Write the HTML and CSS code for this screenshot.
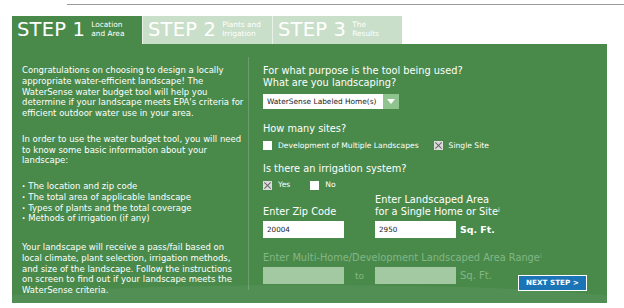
FILE: index.html
```html
<!DOCTYPE html>
<html lang="en">
<head>
    <meta charset="UTF-8">
    <meta name="viewport" content="width=device-width, initial-scale=1.0">
    <title>WaterSense Water Budget Tool</title>
    <link rel="stylesheet" href="styles.css">
</head>
<body>
    <div class="top-rule"></div>
    <div class="wizard">
        <div class="tabs">
            <div class="tab active">
                <span class="tab-step">STEP 1</span>
                <span class="tab-label">Location<br>and Area</span>
            </div>
            <div class="tab">
                <span class="tab-step">STEP 2</span>
                <span class="tab-label">Plants and<br>Irrigation</span>
            </div>
            <div class="tab">
                <span class="tab-step">STEP 3</span>
                <span class="tab-label">The<br>Results</span>
            </div>
        </div>
        <div class="panel">
            <div class="panel-bg"></div>
            <div class="intro">
                <p>Congratulations on choosing to design a locally<br>appropriate water-efficient landscape! The<br>WaterSense water budget tool will help you<br>determine if your landscape meets EPA's criteria for<br>efficient outdoor water use in your area.</p>
                <p>In order to use the water budget tool, you will need<br>to know some basic information about your<br>landscape:</p>
                <ul>
                    <li>The location and zip code</li>
                    <li>The total area of applicable landscape</li>
                    <li>Types of plants and the total coverage</li>
                    <li>Methods of irrigation (if any)</li>
                </ul>
                <p>Your landscape will receive a pass/fail based on<br>local climate, plant selection, irrigation methods,<br>and size of the landscape. Follow the instructions<br>on screen to find out if your landscape meets the<br>WaterSense criteria.</p>
            </div>
            <div class="divider"></div>
            <form class="questions">
                <div class="q-title">For what purpose is the tool being used?<br>What are you landscaping?</div>
                <div class="select">
                    <span class="select-value">WaterSense Labeled Home(s)</span>
                    <span class="select-arrow"></span>
                </div>

                <div class="q-title q-sites">How many sites?</div>
                <div class="checks">
                    <span class="check"><span class="box"></span>Development of Multiple Landscapes</span>
                    <span class="check check-single"><span class="box checked"></span>Single Site</span>
                </div>

                <div class="q-title q-irrigation">Is there an irrigation system?</div>
                <div class="checks">
                    <span class="check"><span class="box checked"></span>Yes</span>
                    <span class="check check-no"><span class="box"></span>No</span>
                </div>

                <div class="fields">
                    <div class="field field-zip">
                        <div class="q-title">Enter Zip Code</div>
                        <div class="text-input">20004</div>
                    </div>
                    <div class="field">
                        <div class="q-title">Enter Landscaped Area<br>for a Single Home or Site<sup>i</sup></div>
                        <div class="field-row">
                            <div class="text-input">2950</div>
                            <span class="unit">Sq. Ft.</span>
                        </div>
                    </div>
                </div>

                <div class="q-title q-range">Enter Multi-Home/Development Landscaped Area Range<sup>i</sup></div>
                <div class="range-row">
                    <div class="text-input disabled"></div>
                    <span class="to">to</span>
                    <div class="text-input disabled"></div>
                    <span class="unit faded">Sq. Ft.</span>
                    <button type="button" class="next">NEXT STEP &gt;</button>
                </div>
            </form>
        </div>
    </div>
</body>
</html>
```

FILE: styles.css
```css
body {
    margin: 0;
    background: #ffffff;
    font-family: "DejaVu Sans", Verdana, sans-serif;
    color: #ffffff;
}
.top-rule {
    margin: 4px 0 0 67px;
    height: 1px;
    background: #9a9a9a;
}
.wizard {
    margin: 11px 0 0 12px;
    width: 595px;
}
.tabs {
    display: flex;
    height: 28px;
}
.tab {
    width: 130px;
    display: flex;
    align-items: center;
    padding-left: 5px;
    box-sizing: border-box;
    background: #c9dfc9;
    border-left: 1px solid #e8f2e8;
}
.tab.active {
    background: #498a4b;
    border-left: none;
}
.tab-step {
    font-size: 19.5px;
    line-height: 20px;
    letter-spacing: 0.2px;
}
.tab-label {
    margin-left: 6px;
    font-size: 7.4px;
    line-height: 9.5px;
    margin-top: -2px;
}
.panel {
    position: relative;
    height: 259px;
    background: #498a4b;
    display: flex;
    overflow: hidden;
}
.panel-bg {
    position: absolute;
    left: -40px;
    right: -40px;
    bottom: -22px;
    height: 40px;
    border-radius: 50%;
    background: rgba(255, 255, 255, 0.05);
}
.intro {
    position: relative;
    width: 224px;
    padding: 21px 0 0 10px;
    font-size: 8.5px;
    line-height: 10.75px;
    white-space: nowrap;
}
.intro p {
    margin: 0 0 15px;
}
.intro ul {
    list-style: none;
    margin: 0 0 18px;
    padding: 0;
}
.intro li::before {
    content: "\00b7  ";
    white-space: pre;
    font-weight: bold;
}
.divider {
    width: 1px;
    margin: 13px 0 13px 2px;
    background: rgba(255, 255, 255, 0.18);
}
.questions {
    position: relative;
    flex: 1;
    padding: 21px 0 0 14px;
}
.q-title {
    font-size: 9.8px;
    line-height: 11.5px;
}
.q-title sup {
    font-size: 6px;
    vertical-align: 3px;
    line-height: 0;
}
.select {
    display: flex;
    width: 136px;
    height: 15px;
    margin-top: 6px;
    background: #ffffff;
}
.select-value {
    flex: 1;
    color: #222222;
    font-size: 7.4px;
    line-height: 15px;
    padding-left: 4px;
}
.select-arrow {
    width: 16px;
    background: #8fc48f;
    position: relative;
}
.select-arrow::after {
    content: "";
    position: absolute;
    left: 4px;
    top: 5px;
    border-left: 4px solid transparent;
    border-right: 4px solid transparent;
    border-top: 5px solid #ffffff;
}
.q-sites {
    margin-top: 14px;
}
.q-irrigation {
    margin-top: 12px;
}
.checks {
    display: flex;
    margin-top: 6px;
    height: 10px;
    font-size: 7.6px;
    line-height: 10px;
}
.check {
    display: flex;
    align-items: center;
}
.check-single {
    margin-left: 15px;
}
.check-no {
    margin-left: 20px;
}
.box {
    width: 9px;
    height: 9px;
    margin-right: 6px;
    background: #ffffff;
    position: relative;
}
.box.checked {
    background: #dcdcdc;
}
.box.checked::before,
.box.checked::after {
    content: "";
    position: absolute;
    left: 4px;
    top: 0;
    width: 1px;
    height: 9px;
    background: #666666;
    transform: rotate(45deg);
}
.box.checked::after {
    transform: rotate(-45deg);
}
.fields {
    display: flex;
    margin-top: 4px;
}
.field {
    display: flex;
    flex-direction: column;
    justify-content: flex-end;
}
.field-zip {
    width: 112px;
}
.field-row {
    display: flex;
    align-items: center;
}
.text-input {
    width: 81px;
    height: 17px;
    margin-top: 4px;
    box-sizing: border-box;
    background: #ffffff;
    color: #222222;
    font-size: 7.2px;
    line-height: 17px;
    padding-left: 4px;
}
.text-input.disabled {
    background: #a3c9a3;
    margin-top: 0;
}
.unit {
    margin: 4px 0 0 4px;
    font-size: 9.4px;
    font-weight: bold;
}
.unit.faded,
.to,
.q-range {
    color: #84b685;
}
.unit.faded {
    margin-top: 0;
    font-weight: normal;
    font-size: 10px;
}
.q-range {
    margin-top: 14px;
}
.range-row {
    display: flex;
    align-items: center;
    margin-top: 4px;
    height: 16px;
}
.to {
    width: 31px;
    text-align: center;
    font-size: 9px;
}
.next {
    margin: 14px 0 0 26px;
    width: 69px;
    height: 16px;
    padding: 0;
    background: #1a74b5;
    border: 1px solid #ffffff;
    color: #ffffff;
    font-family: "DejaVu Sans", Verdana, sans-serif;
    font-size: 7.2px;
    font-weight: bold;
}
```
